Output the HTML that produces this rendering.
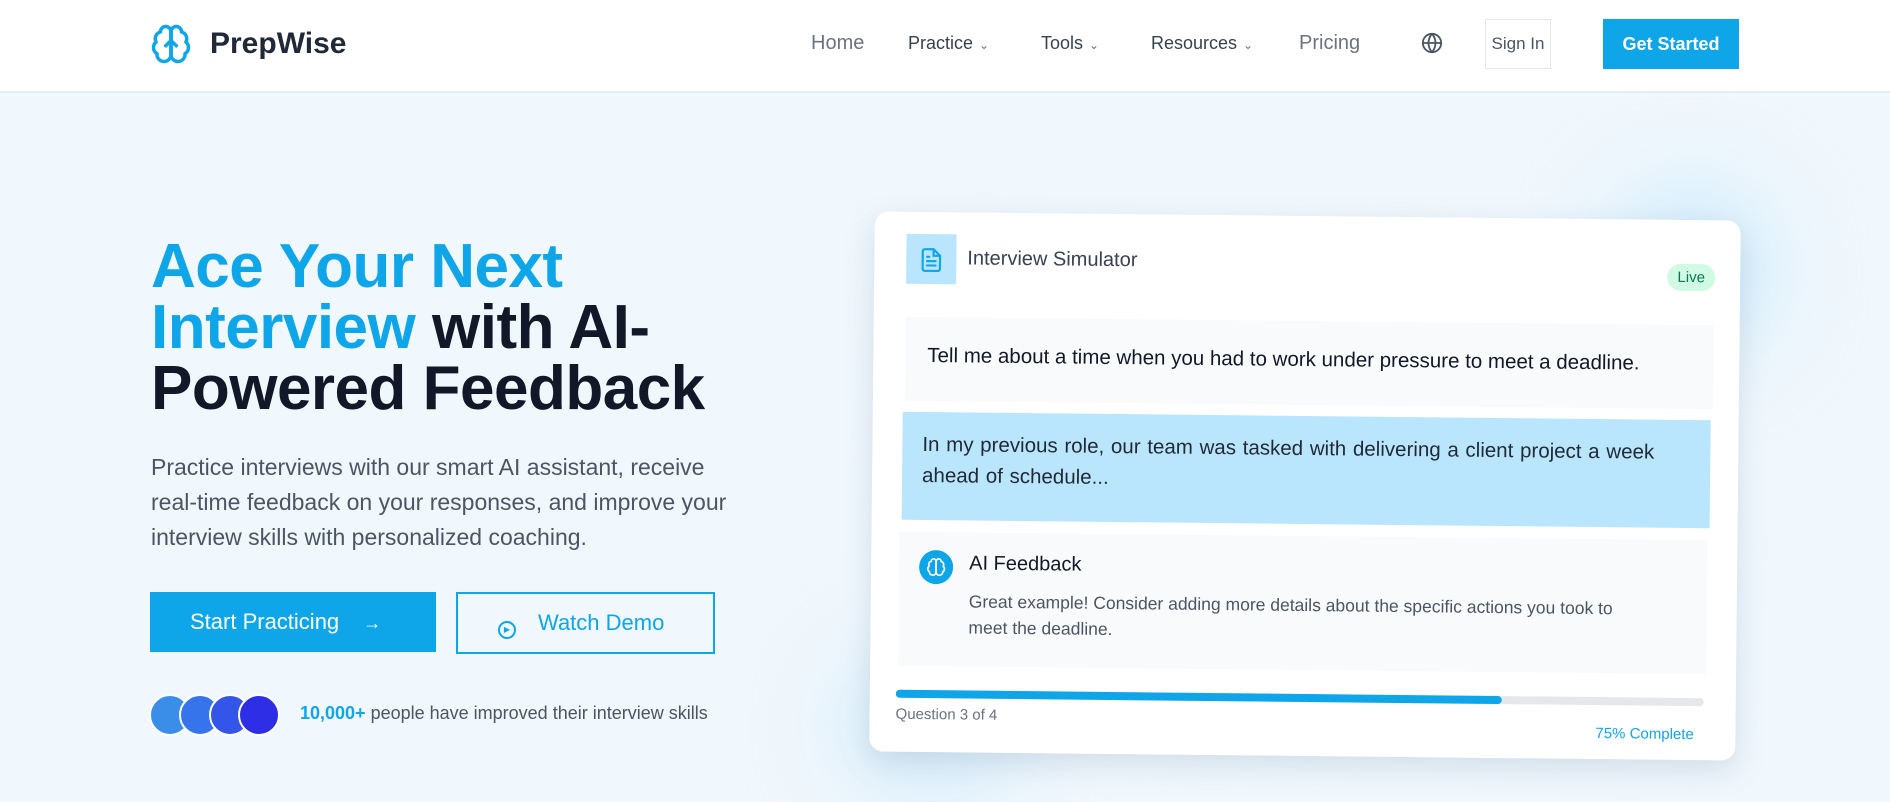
<!DOCTYPE html>
<html><head><meta charset="utf-8"><style>
*{margin:0;padding:0;box-sizing:border-box}
body{width:1890px;height:802px;overflow:hidden;font-family:"Liberation Sans",sans-serif;background:#f0f7fd;position:relative}
.nav{position:absolute;left:0;top:0;width:1890px;height:93px;background:#fff;border-bottom:2px solid #e5edf4}
.a{position:absolute}
.ni{position:absolute;top:33px;font-size:18px;color:#374151}
.ni i{font-style:normal;font-size:12px;margin-left:6px;color:#6b7280}
.glow{position:absolute;border-radius:50%;filter:blur(45px)}
h1{position:absolute;left:151px;top:236px;font-size:62px;line-height:61px;font-weight:700;color:#111827;letter-spacing:-0.5px}
h1 span{color:#0ea5e9}
</style></head><body>
<div class="nav">
 <svg class="a" style="left:150px;top:22px" width="42" height="44" viewBox="0 0 24 24" fill="none" stroke="#0ea5e9" stroke-width="2" stroke-linecap="round" stroke-linejoin="round"><path d="M12 5a3 3 0 1 0-5.997.125 4 4 0 0 0-2.526 5.77 4 4 0 0 0 .556 6.588A4 4 0 1 0 12 18Z"/><path d="M12 5a3 3 0 1 1 5.997.125 4 4 0 0 1 2.526 5.77 4 4 0 0 1-.556 6.588A4 4 0 1 1 12 18Z"/><path d="M12 5v13"/><path d="M9 13l3-3 3 3"/></svg>
 <div class="a" style="left:210px;top:27px;font-size:30px;font-weight:700;color:#1f2937">PrepWise</div>
 <div class="ni" style="left:811px;color:#6b7280;font-size:20px;top:32px">Home</div>
 <div class="ni" style="left:908px">Practice<i>⌄</i></div>
 <div class="ni" style="left:1041px">Tools<i>⌄</i></div>
 <div class="ni" style="left:1151px">Resources<i>⌄</i></div>
 <div class="ni" style="left:1299px;color:#6b7280;font-size:20px;top:32px">Pricing</div>
 <svg class="a" style="left:1421px;top:32px" width="22" height="22" viewBox="0 0 24 24" fill="none" stroke="#4b5563" stroke-width="2"><circle cx="12" cy="12" r="10"/><path d="M2 12h20M12 2a15 15 0 0 1 0 20M12 2a15 15 0 0 0 0 20"/></svg>
 <div class="a" style="left:1485px;top:19px;width:66px;height:50px;border:1px solid #e5e7eb;color:#4b5563;font-size:17px;line-height:48px;text-align:center">Sign In</div>
 <div class="a" style="left:1603px;top:19px;width:136px;height:50px;background:#0ea5e9;color:#fff;font-size:18px;font-weight:700;line-height:50px;text-align:center">Get Started</div>
</div>
<h1><span>Ace Your Next<br>Interview</span> with AI-<br>Powered Feedback</h1>
<div class="a" style="left:151px;top:450px;font-size:23px;line-height:35px;color:#4b5563;width:700px">Practice interviews with our smart AI assistant, receive<br>real-time feedback on your responses, and improve your<br>interview skills with personalized coaching.</div>
<div class="a" style="left:150px;top:592px;width:286px;height:60px;background:#0ea5e9;color:#fff;font-size:22px;line-height:60px;padding-left:40px">Start Practicing <span style="margin-left:18px;font-size:18px">→</span></div>
<div class="a" style="left:456px;top:592px;width:259px;height:62px;border:2px solid #0ea5e9;color:#0ea5e9;font-size:22px;line-height:58px;padding-left:40px"><span style="display:inline-block;width:18px;height:18px;border:2px solid #0ea5e9;border-radius:50%;vertical-align:-2px;margin-right:22px;font-size:8px;line-height:14px;text-align:center">▶</span>Watch Demo</div>
<div class="a" style="left:149px;top:694px;width:42px;height:42px;border-radius:50%;background:#3b8ee8;border:2px solid #fff"></div>
<div class="a" style="left:179px;top:694px;width:42px;height:42px;border-radius:50%;background:#3574ea;border:2px solid #fff"></div>
<div class="a" style="left:209px;top:694px;width:42px;height:42px;border-radius:50%;background:#3355e8;border:2px solid #fff"></div>
<div class="a" style="left:238px;top:694px;width:42px;height:42px;border-radius:50%;background:#2e2ee6;border:2px solid #fff"></div>
<div class="a" style="left:300px;top:703px;font-size:18px;color:#4b5563"><b style="color:#0ea5e9;font-weight:600">10,000+</b> people have improved their interview skills</div>
<div class="glow" style="left:1610px;top:190px;width:160px;height:160px;background:#cdebfb"></div>
<div class="glow" style="left:840px;top:660px;width:180px;height:130px;background:#d3ecfa"></div>
<div class="a" style="left:872px;top:216px;width:866px;height:540px;background:#fff;border-radius:14px;box-shadow:0 10px 30px rgba(100,130,160,.22);transform:rotate(0.6deg)">
 <div class="a" style="left:32px;top:22px;width:50px;height:50px;background:#bae6fd"></div>
 <svg class="a" style="left:44px;top:34px" width="26" height="28" viewBox="0 0 24 24" fill="none" stroke="#0ea5e9" stroke-width="2" stroke-linecap="round"><path d="M14 2H6a2 2 0 0 0-2 2v16a2 2 0 0 0 2 2h12a2 2 0 0 0 2-2V8z"/><path d="M14 2v6h6M8 13h8M8 17h8M8 9h2"/></svg>
 <div class="a" style="left:93px;top:35px;font-size:20px;color:#374151">Interview Simulator</div>
 <div class="a" style="left:793px;top:44px;width:48px;height:27px;border-radius:14px;background:#d1fae5;color:#047857;font-size:15px;line-height:27px;text-align:center">Live</div>
 <div class="a" style="left:32px;top:105px;width:808px;height:84px;background:#f8fafc;padding:27px 22px;font-size:20.5px;color:#111827">Tell me about a time when you had to work under pressure to meet a deadline.</div>
 <div class="a" style="left:30px;top:200px;width:808px;height:108px;background:#bae6fd;padding:17px 20px;font-size:20.5px;line-height:31px;color:#1f2937;word-spacing:1px">In my previous role, our team was tasked with delivering a client project a week<br>ahead of schedule...</div>
 <div class="a" style="left:28px;top:320px;width:808px;height:134px;background:#f8fafc"></div>
 <div class="a" style="left:48px;top:338px;width:34px;height:34px;border-radius:50%;background:#0ea5e9"></div>
 <svg class="a" style="left:55px;top:345px" width="20" height="20" viewBox="0 0 24 24" fill="none" stroke="#fff" stroke-width="2"><path d="M12 5a3 3 0 1 0-6 .1 4 4 0 0 0-2.5 5.8 4 4 0 0 0 .5 6.6A4 4 0 1 0 12 18Z"/><path d="M12 5a3 3 0 1 1 6 .1 4 4 0 0 1 2.5 5.8 4 4 0 0 1-.5 6.6A4 4 0 1 1 12 18Z"/><path d="M12 5v13"/></svg>
 <div class="a" style="left:98px;top:340px;font-size:20px;color:#111827">AI Feedback</div>
 <div class="a" style="left:98px;top:376px;width:720px;font-size:17.5px;line-height:26px;color:#4b5563">Great example! Consider adding more details about the specific actions you took to<br>meet the deadline.</div>
 <div class="a" style="left:26px;top:478px;width:808px;height:8px;border-radius:4px;background:#e5e7eb"><div style="width:75%;height:8px;border-radius:4px;background:#0ea5e9"></div></div>
 <div class="a" style="left:26px;top:494px;font-size:15px;color:#6b7280">Question 3 of 4</div>
 <div class="a" style="left:726px;top:506px;font-size:15px;color:#0ea5e9">75% Complete</div>
</div>
</body></html>
